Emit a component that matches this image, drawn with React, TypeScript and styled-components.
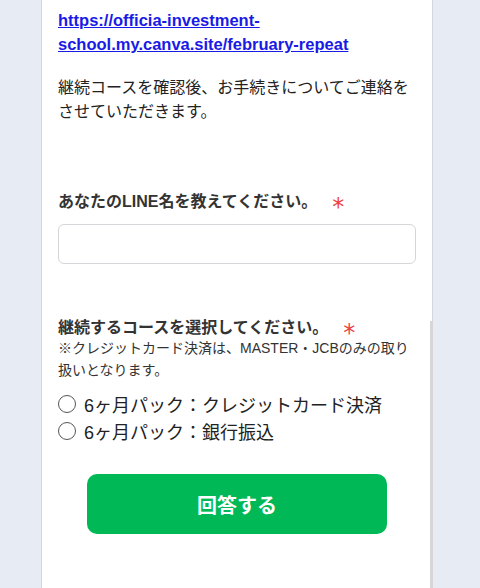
import React from "react";
import styled, { createGlobalStyle } from "styled-components";

const Global = createGlobalStyle`
  html, body { margin: 0; padding: 0; background: #e6ebf4; }
  body { font-family: "Liberation Sans", "Noto Sans CJK JP", sans-serif; color: #222; }
  * { box-sizing: border-box; }
`;

const Page = styled.div`
  width: 480px;
  height: 588px;
  overflow: hidden;
  padding-left: 41px;
`;

const Card = styled.div`
  width: 392px;
  min-height: 588px;
  background: #fff;
  border-left: 1px solid #d3d8e0;
  display: flex;
  flex-direction: column;
`;

const Section = styled.div<{ $strip?: boolean }>`
  padding: ${(p) => (p.$strip ? "0 14px 0 16px" : "8px 16px 0 16px")};
  border-right: ${(p) => (p.$strip ? "3px solid #d6d6d6" : "1px solid #d3d8e0")};
  ${(p) => (p.$strip ? "flex: 1;" : "padding-bottom: 57px;")}
  display: flex;
  flex-direction: column;
`;

const Link = styled.a`
  font-size: 16.5px;
  font-weight: 700;
  line-height: 24px;
  color: #1a1ae6;
  text-decoration: underline;
`;

const Para = styled.p`
  margin: 20px 0 0;
  font-size: 16px;
  line-height: 24px;
  color: #222;
`;

const Label = styled.div<{ $top: number; $lh: number }>`
  margin-top: ${(p) => p.$top}px;
  height: ${(p) => p.$lh}px;
  font-size: 16px;
  font-weight: 700;
  line-height: ${(p) => p.$lh}px;
  color: #333;
  display: flex;
  align-items: center;
`;

const Req = styled.span`
  color: #f04040;
  font-family: "DejaVu Sans", sans-serif;
  font-weight: 400;
  font-size: 24px;
  line-height: 0;
  margin-left: 15px;
  position: relative;
  top: 5px;
`;

const Input = styled.input`
  margin-top: 10px;
  height: 40px;
  width: 100%;
  border: 1px solid #d6d6da;
  border-radius: 6px;
  outline: none;
  font-size: 16px;
  padding: 0 10px;
`;

const Note = styled.div`
  margin-top: 2px;
  font-size: 14px;
  line-height: 22px;
  color: #333;
`;

const Options = styled.div`
  margin-top: 9px;
  display: flex;
  flex-direction: column;
`;

const Option = styled.label`
  display: flex;
  align-items: center;
  height: 27px;
  font-size: 18px;
  color: #222;
  cursor: pointer;
`;

const Radio = styled.span`
  width: 18px;
  height: 18px;
  border-radius: 50%;
  border: 1px solid #555;
  margin-right: 8px;
  flex-shrink: 0;
`;

const Button = styled.button`
  margin: 30px auto 0;
  width: 300px;
  height: 60px;
  border: none;
  border-radius: 10px;
  background: #00b956;
  color: #fff;
  font-family: "Noto Sans CJK JP", sans-serif;
  font-size: 20px;
  font-weight: 700;
  cursor: pointer;
`;

export default function App() {
  return (
    <>
      <Global />
      <Page>
        <Card>
          <Section>
            <Link href="#">https://officia-investment-school.my.canva.site/february-repeat</Link>
            <Para>継続コースを確認後、お手続きについてご連絡をさせていただきます。</Para>
            <Label $top={66} $lh={24}>
              あなたのLINE名を教えてください。<Req>*</Req>
            </Label>
            <Input type="text" />
          </Section>
          <Section $strip>
            <Label $top={0} $lh={14}>
              継続するコースを選択してください。<Req>*</Req>
            </Label>
            <Note>※クレジットカード決済は、MASTER・JCBのみの取り扱いとなります。</Note>
            <Options>
              <Option>
                <Radio />
                6ヶ月パック：クレジットカード決済
              </Option>
              <Option>
                <Radio />
                6ヶ月パック：銀行振込
              </Option>
            </Options>
            <Button>回答する</Button>
          </Section>
        </Card>
      </Page>
    </>
  );
}
